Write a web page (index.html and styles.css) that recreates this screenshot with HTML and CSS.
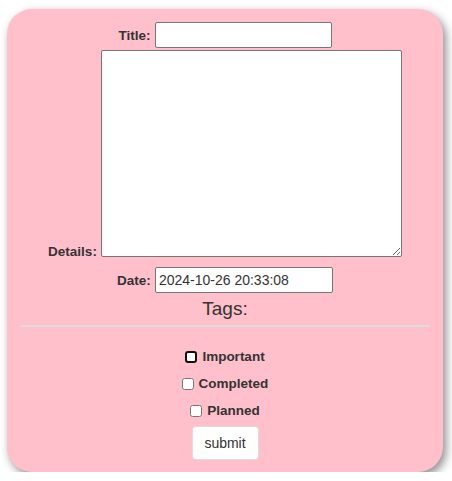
FILE: index.html
```html
<!DOCTYPE html>
<html lang="en">
<head>
    <meta charset="UTF-8">
    <meta name="viewport" content="width=device-width, initial-scale=1.0">
    <title>Add Note</title>
    <link rel="stylesheet" href="styles.css">
</head>
<body>

    <form class="note-form" id="note-form">
        <div class="row">
            <label for="title">Title:</label>
            <input type="text" id="title" class="field">
        </div>
        <div class="row row-details">
            <label for="details" class="details-label">Details:</label>
            <textarea id="details"></textarea>
        </div>
        <div class="row row-date">
            <label for="date">Date:</label>
            <input type="text" id="date" class="field" value="2024-10-26 20:33:08">
        </div>

        <div class="tags-title">Tags:</div>
        <hr>

        <div class="tag tag-first">
            <input type="checkbox" id="important" class="focused">
            <label for="important">Important</label>
        </div>
        <div class="tag">
            <input type="checkbox" id="completed">
            <label for="completed">Completed</label>
        </div>
        <div class="tag">
            <input type="checkbox" id="planned">
            <label for="planned">Planned</label>
        </div>

        <div class="actions">
            <button type="button">submit</button>
        </div>
    </form>

</body>
</html>
```

FILE: styles.css
```css
* {
    box-sizing: border-box;
}

body {
    margin: 0;
    font-family: "Liberation Sans", Arial, sans-serif;
    color: #333;
}

.note-form {
    width: 436px;
    margin: 9px 0 0 7px;
    padding: 13px 13px 12px;
    background-color: pink;
    border-radius: 25px;
    box-shadow: 3px 4px 10px rgba(0, 0, 0, 0.45);
}

.row {
    display: flex;
    justify-content: center;
    align-items: center;
    gap: 4px;
}

.row label,
.tag label {
    font-size: 13.5px;
    font-weight: bold;
}

.field {
    width: 177px;
    height: 26px;
    margin: 0;
    padding: 1px 3px;
    border: 1px solid #767676;
    border-radius: 2px;
    font-family: inherit;
    font-size: 14px;
    color: #333;
    background: #fff;
}

.row-details {
    margin-top: 2px;
    align-items: flex-end;
}

.details-label {
    line-height: 14px;
    margin-bottom: -2px;
}

textarea {
    width: 301px;
    height: 207px;
    margin: 0;
    border: 1px solid #767676;
    border-radius: 2px;
    background: #fff;
}

.row-date {
    margin-top: 10px;
}

.row-date .field {
    width: 178px;
}

.tags-title {
    margin-top: 5px;
    text-align: center;
    font-size: 19px;
    line-height: 22px;
}

hr {
    margin: 5px 0 0;
    border: none;
    border-top: 2px solid #dcdcdc;
}

.tag {
    display: flex;
    justify-content: center;
    align-items: center;
    gap: 5px;
    height: 27px;
}

.tag-first {
    margin-top: 16px;
}

.tag input {
    width: 12px;
    height: 12px;
    margin: 0;
}

.tag input.focused {
    appearance: none;
    width: 12px;
    height: 12px;
    border: 2px solid #111;
    border-radius: 3px;
    background-color: #fff;
}

.actions {
    display: flex;
    justify-content: center;
    margin-top: 2px;
}

button {
    width: 67px;
    height: 34px;
    border: 1px solid #ddd;
    border-radius: 4px;
    background-color: #fff;
    font-family: inherit;
    font-size: 14px;
    color: #333;
}
```
